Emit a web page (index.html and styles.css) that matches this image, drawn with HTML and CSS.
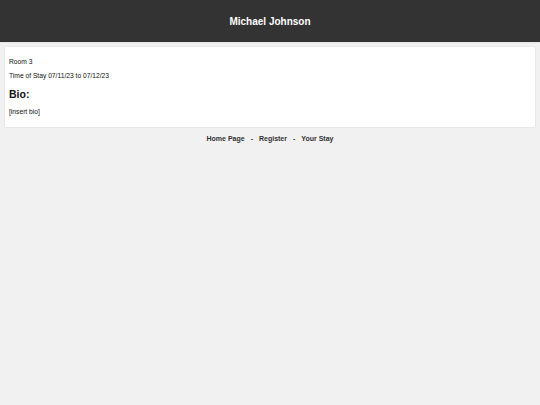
FILE: index.html
```html
<!DOCTYPE html>
<html lang="en">
<head>
<meta charset="utf-8">
<title>Michael Johnson</title>
<link rel="stylesheet" href="styles.css">
</head>
<body>
  <header class="site-header">
    <h1 class="site-title">Michael Johnson</h1>
  </header>
  <main class="profile-card">
    <p class="info">Room 3</p>
    <p class="info">Time of Stay 07/11/23 to 07/12/23</p>
    <h2 class="bio-heading">Bio:</h2>
    <p class="info">[insert bio]</p>
  </main>
  <nav class="footer-nav">
    <a href="#">Home Page</a>
    <span class="sep">-</span>
    <a href="#">Register</a>
    <span class="sep">-</span>
    <a href="#">Your Stay</a>
  </nav>
</body>
</html>
```
FILE: styles.css
```css
html, body {
  margin: 0;
  padding: 0;
}

body {
  background: #f1f1f1;
  font-family: "Liberation Sans", Arial, sans-serif;
  color: #111;
  min-height: 405px;
}

.site-header {
  background: #333333;
  height: 42px;
  display: flex;
  align-items: center;
  justify-content: center;
  border-bottom: 1px solid #e6e6e6;
}

.site-title {
  margin: 0;
  color: #ffffff;
  font-size: 10px;
  font-weight: bold;
  line-height: 13px;
}

.profile-card {
  display: block;
  background: #ffffff;
  margin: 4px 5px 0;
  padding: 11px 4px 11px;
  box-shadow: 0 0 1px rgba(0, 0, 0, 0.2);
}

.info {
  margin: 0;
  font-size: 6.7px;
  line-height: 8px;
}

.info + .info {
  margin-top: 6px;
}

.bio-heading {
  margin: 8px 0 7px;
  font-size: 10.5px;
  line-height: 13px;
  font-weight: bold;
}

.footer-nav {
  margin-top: 8px;
  display: flex;
  justify-content: center;
  gap: 6px;
  font-size: 7px;
  line-height: 8px;
  font-weight: bold;
  color: #333;
}

.footer-nav a {
  color: #333;
  text-decoration: none;
}
```
